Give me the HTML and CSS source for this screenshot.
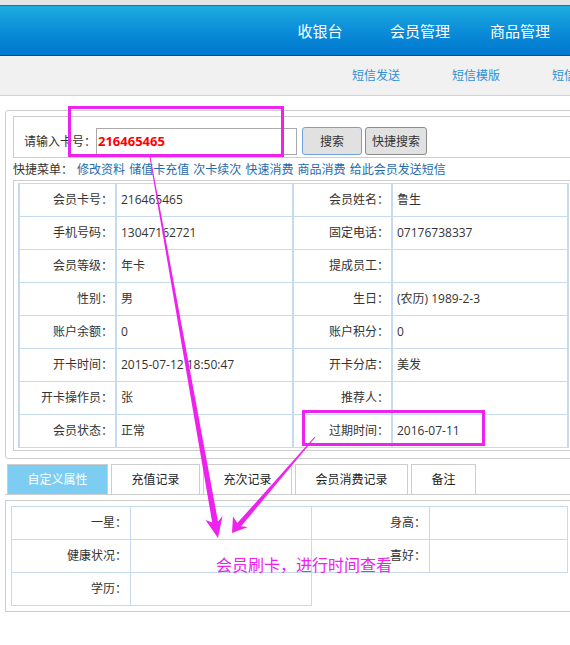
FILE: index.html
```html
<!DOCTYPE html>
<html lang="zh-CN">
<head>
<meta charset="utf-8">
<title>会员管理</title>
<link rel="stylesheet" href="styles.css">
</head>
<body>
<div class="window-edge"></div>
<header class="masthead">
  <nav class="main-nav">
    <a href="#">收银台</a>
    <a href="#">会员管理</a>
    <a href="#">商品管理</a>
  </nav>
</header>
<nav class="sub-nav">
  <a href="#">短信发送</a>
  <a href="#">短信模版</a>
  <a href="#">短信记录</a>
</nav>

<main class="page">
  <section class="member-panel">
    <form class="search-bar">
      <label class="search-label" for="card">请输入卡号：</label>
      <input class="card-input" id="card" type="text" value="216465465">
      <button class="btn btn-focus" type="button">搜索</button>
      <button class="btn btn-wide" type="button">快捷搜索</button>
    </form>
    <div class="quick-menu"><span class="quick-title">快捷菜单：</span><a href="#">修改资料</a> <a href="#">储值卡充值</a> <a href="#">次卡续次</a> <a href="#">快速消费</a> <a href="#">商品消费</a> <a href="#">给此会员发送短信</a></div>
    <div class="info-frame">
      <table class="info-table">
        <colgroup><col class="c-label"><col class="c-value"><col class="c-label2"><col class="c-value2"></colgroup>
        <tr><th>会员卡号：</th><td>216465465</td><th>会员姓名：</th><td>鲁生</td></tr>
        <tr><th>手机号码：</th><td>13047162721</td><th>固定电话：</th><td>07176738337</td></tr>
        <tr><th>会员等级：</th><td>年卡</td><th>提成员工：</th><td></td></tr>
        <tr><th>性别：</th><td>男</td><th>生日：</th><td>(农历) 1989-2-3</td></tr>
        <tr><th>账户余额：</th><td>0</td><th>账户积分：</th><td>0</td></tr>
        <tr><th>开卡时间：</th><td>2015-07-12 18:50:47</td><th>开卡分店：</th><td>美发</td></tr>
        <tr><th>开卡操作员：</th><td>张</td><th>推荐人：</th><td></td></tr>
        <tr><th>会员状态：</th><td>正常</td><th>过期时间：</th><td>2016-07-11</td></tr>
      </table>
    </div>
  </section>

  <ul class="tab-strip">
    <li class="tab tab-active t1">自定义属性</li>
    <li class="tab t2">充值记录</li>
    <li class="tab t3">充次记录</li>
    <li class="tab t4">会员消费记录</li>
    <li class="tab t5">备注</li>
  </ul>

  <section class="attr-panel">
    <table class="attr-table">
      <colgroup><col class="a1"><col class="a2"><col class="a3"><col class="a4"></colgroup>
      <tr><th>一星：</th><td></td><th>身高：</th><td></td></tr>
      <tr><th>健康状况：</th><td></td><th>喜好：</th><td></td></tr>
      <tr><th>学历：</th><td></td></tr>
    </table>
  </section>
</main>

<div class="markup">
  <svg class="markup-lines" width="570" height="645" viewBox="0 0 570 645">
    <rect x="69.5" y="107.5" width="213" height="48" fill="none" stroke="#ee22ee" stroke-width="3"/>
    <rect x="303.5" y="411.5" width="180" height="33" fill="none" stroke="#ee22ee" stroke-width="3"/>
    <polygon points="149.5,157 212.2,522.5 205.5,520 218,538 222.5,516 218,521.5 150.5,157" fill="#ee22ee"/>
    <polygon points="314.6,436.7 237.3,523.1 233,516.5 232,533 248,527 241.1,526.3 315.4,437.3" fill="#ee22ee"/>
  </svg>
  <p class="markup-note">会员刷卡，进行时间查看</p>
</div>
</body>
</html>
```
FILE: styles.css
```css
* {
  box-sizing: border-box;
}

html,
body {
  margin: 0;
  padding: 0;
}

body {
  position: relative;
  width: 570px;
  height: 645px;
  overflow: hidden;
  background: #fff;
  font-family: "Open Sans", "Noto Sans CJK SC", sans-serif;
  font-size: 12px;
  color: #333;
}

a {
  text-decoration: none;
}

/* window chrome line above the header */
.window-edge {
  height: 6px;
  background: #e4e4e4;
  border-bottom: 1px solid #56636d;
}

/* blue top header */
.masthead {
  height: 50px;
  background: linear-gradient(#1cade0, #0a8ad7 55%, #0078cf);
  border-bottom: 1px solid #1f4466;
}

.main-nav {
  display: flex;
  padding-left: 270px;
}

.main-nav a {
  flex: none;
  width: 100px;
  text-align: center;
  line-height: 50px;
  font-size: 15px;
  color: #fff;
}

/* grey secondary menu */
.sub-nav {
  display: flex;
  height: 40px;
  padding-left: 326px;
  background: #f1f1f1;
  border-bottom: 1px solid #d2d2d2;
}

.sub-nav a {
  flex: none;
  width: 100px;
  text-align: center;
  line-height: 40px;
  font-size: 12px;
  color: #2b8fd8;
}

.page {
  width: 640px;
  padding-top: 14px;
}

/* member lookup panel */
.member-panel {
  margin-left: 5px;
  padding: 5px 7px 7px;
  border: 1px solid #cdcdcd;
  border-radius: 3px;
}

.search-bar {
  display: flex;
  align-items: center;
  margin: 0;
  padding: 10px 10px 2px;
  border: 1px solid #cdcdcd;
}

.search-label {
  flex: none;
  width: 72px;
  white-space: nowrap;
  font-size: 12px;
  color: #333;
}

.card-input {
  flex: none;
  width: 201px;
  height: 27px;
  margin: 0;
  padding: 0 1px;
  border: 1px solid #a9a9a9;
  font-family: "Open Sans", "Noto Sans CJK SC", sans-serif;
  font-size: 13px;
  font-weight: bold;
  color: #f00;
  outline: none;
}

.btn {
  flex: none;
  width: 60px;
  height: 28px;
  margin: 0 0 0 5px;
  padding: 0;
  background: #e1e1e1;
  border: 1px solid #8c8c8c;
  border-radius: 3px;
  font-family: "Open Sans", "Noto Sans CJK SC", sans-serif;
  font-size: 12px;
  color: #333;
}

.btn-focus {
  border-color: #6fa3e0;
}

.btn-wide {
  width: 62px;
  margin-left: 3px;
}

.quick-menu {
  padding-top: 2px;
  line-height: 20px;
  white-space: nowrap;
  word-spacing: 1px;
}

.quick-title {
  margin-right: 4px;
}

.quick-menu a {
  color: #1f6aa9;
}

.info-frame {
  padding: 2px 4px;
  border: 1px solid #cdcdcd;
}

/* member details grid */
.info-table {
  width: 551px;
  table-layout: fixed;
  border-collapse: separate;
  border-spacing: 0;
  border-top: 1px solid #c6daef;
  border-left: 2px solid #c6daef;
}

.c-label { width: 97px; }
.c-value { width: 177px; }
.c-label2 { width: 99px; }
.c-value2 { width: 176px; }

.info-table th,
.info-table td {
  padding: 0;
  line-height: 32px;
  font-weight: normal;
  white-space: nowrap;
  border-right: 2px solid #c6daef;
  border-bottom: 1px solid #c6daef;
}

.info-table th {
  text-align: right;
  padding-right: 2px;
}

.info-table td {
  text-align: left;
  padding-left: 4px;
}

/* tabs */
.tab-strip {
  display: flex;
  gap: 3px;
  margin: 5px 0 0 5px;
  padding: 0 0 0 2px;
  list-style: none;
  border-bottom: 1px solid #cdcdcd;
}

.tab {
  flex: none;
  height: 30px;
  line-height: 29px;
  text-align: center;
  font-size: 12px;
  color: #222;
  border: 1px solid #cdcdcd;
  border-bottom: none;
}

.tab-active {
  background: #7dcdf3;
  color: #fff;
}

.t1 { width: 101px; }
.t2 { width: 89px; }
.t3 { width: 89px; }
.t4 { width: 113px; }
.t5 { width: 65px; }

/* custom attributes */
.attr-panel {
  margin: 5px 0 0 5px;
  padding: 5px 5px 5px;
  border: 1px solid #cdcdcd;
}

.attr-table {
  width: 556px;
  table-layout: fixed;
  border-collapse: collapse;
}

.a1 { width: 119px; }
.a2 { width: 181px; }
.a3 { width: 118px; }
.a4 { width: 138px; }

.attr-table th,
.attr-table td {
  padding: 0;
  height: 33px;
  line-height: 32px;
  font-weight: normal;
  border: 1px solid #c6daef;
}

.attr-table th {
  text-align: right;
  padding-right: 3px;
}

/* annotation layer drawn over the page */
.markup {
  position: absolute;
  left: 0;
  top: 0;
  width: 570px;
  height: 645px;
  pointer-events: none;
}

.markup-lines {
  display: block;
}

.markup-note {
  position: absolute;
  left: 216px;
  top: 554px;
  margin: 0;
  font-family: "Noto Sans CJK SC", sans-serif;
  font-size: 16px;
  line-height: 20px;
  color: #ee22ee;
  white-space: nowrap;
}
```
